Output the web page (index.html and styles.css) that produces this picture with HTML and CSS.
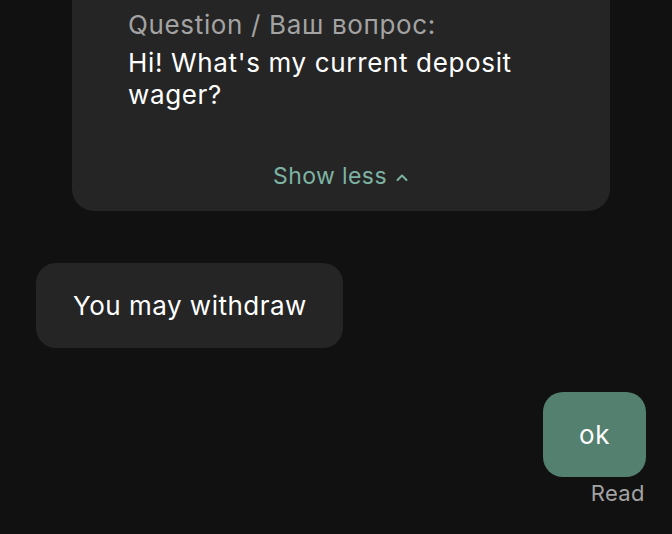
FILE: index.html
```html
<!DOCTYPE html>
<html>
<head>
<meta charset="utf-8">
<link rel="stylesheet" href="styles.css">
</head>
<body>
<div class="chat">
  <div class="card">
    <div class="label">Question / Ваш вопрос:</div>
    <div class="question">Hi! What's my current deposit<br>wager?</div>
    <div class="toggle">Show less
      <svg class="chev" width="14" height="10" viewBox="0 0 14 10"><path d="M2.5 8 L7 3.5 L11.5 8" fill="none" stroke="currentColor" stroke-width="2" stroke-linecap="round" stroke-linejoin="round"/></svg>
    </div>
  </div>
  <div class="row in">
    <div class="bubble incoming">You may withdraw</div>
  </div>
  <div class="row out">
    <div class="bubble outgoing">ok</div>
    <div class="status">Read</div>
  </div>
</div>
</body>
</html>
```
FILE: styles.css
```css
html, body {
  margin: 0;
  padding: 0;
  background: #111111;
  font-family: Inter, "Noto Sans", sans-serif;
}
.chat {
  display: flex;
  flex-direction: column;
  width: 672px;
  height: 534px;
  overflow: hidden;
}
.card {
  margin-left: 72px;
  width: 538px;
  box-sizing: border-box;
  background: #252525;
  border-radius: 0 0 22px 22px;
  padding: 9px 30px 20px 56px;
}
.label {
  color: #a3a3a3;
  font-size: 26px;
  letter-spacing: 0.65px;
  line-height: 32px;
  margin-bottom: 6px;
}
.question {
  color: #ffffff;
  font-size: 26px;
  letter-spacing: 0.65px;
  line-height: 32px;
}
.toggle {
  margin-top: 50px;
  margin-left: -56px;
  margin-right: -30px;
  display: flex;
  justify-content: center;
  align-items: center;
  gap: 8px;
  color: #7db3a3;
  font-size: 23px;
  letter-spacing: 0.4px;
  line-height: 30px;
}
.chev { margin-top: 2px; }
.row { display: flex; }
.row.in { margin-top: 52px; padding-left: 36px; }
.row.out {
  margin-top: 44px;
  flex-direction: column;
  align-items: flex-end;
  padding-right: 26px;
}
.bubble {
  font-size: 26px;
  letter-spacing: 0.5px;
  line-height: 32px;
  color: #ffffff;
  border-radius: 20px;
  box-sizing: border-box;
  height: 85px;
  display: flex;
  align-items: center;
}
.incoming {
  background: #252525;
  padding: 0 36px 0 37px;
}
.outgoing {
  background: #53806f;
  width: 103px;
  justify-content: center;
}
.status {
  color: #a3a3a3;
  font-size: 22px;
  letter-spacing: 0.4px;
  line-height: 30px;
  margin-top: 1px;
  margin-right: 1px;
}
```
